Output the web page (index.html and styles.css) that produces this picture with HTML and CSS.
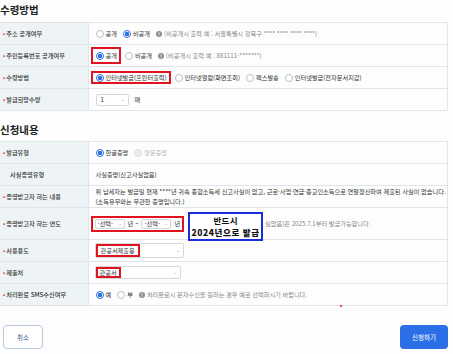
FILE: index.html
```html
<!DOCTYPE html>
<html lang="ko">
<head>
    <meta charset="UTF-8">
    <meta name="viewport" content="width=device-width, initial-scale=1.0">
    <title>사실증명 신청</title>
    <link rel="stylesheet" href="styles.css">
</head>
<body>
    <div class="page">
        <h2 class="sec-title">수령방법</h2>
        <table class="form-table">
            <colgroup><col class="col-label"><col></colgroup>
            <tr>
                <th><span class="req">•</span>주소 공개여부</th>
                <td>
                    <div class="field">
                        <span class="radio"><i class="dot"></i>공개</span>
                        <span class="radio on"><i class="dot"></i>비공개</span>
                        <span class="hint"><i class="info">!</i>[비공개시 출력 예 : 서울특별시 강북구 **** **** **** ****)</span>
                    </div>
                </td>
            </tr>
            <tr>
                <th><span class="req">•</span>주민등록번호 공개여부</th>
                <td>
                    <div class="field">
                        <span class="mark mark-tall"><span class="radio on"><i class="dot"></i>공개</span></span>
                        <span class="radio"><i class="dot"></i>비공개</span>
                        <span class="hint"><i class="info">!</i>[비공개시 출력 예 : 881111-*******)</span>
                    </div>
                </td>
            </tr>
            <tr>
                <th><span class="req">•</span>수령방법</th>
                <td>
                    <div class="field">
                        <span class="mark"><span class="radio on"><i class="dot"></i>인터넷발급(프린터출력)</span></span>
                        <span class="radio"><i class="dot"></i>인터넷열람(화면조회)</span>
                        <span class="radio"><i class="dot"></i>팩스발송</span>
                        <span class="radio"><i class="dot"></i>인터넷발급(전자문서지갑)</span>
                    </div>
                </td>
            </tr>
            <tr>
                <th><span class="req">•</span>발급희망수량</th>
                <td>
                    <div class="field">
                        <span class="select sel-qty">1<i class="caret">⌄</i></span>
                        <span>매</span>
                    </div>
                </td>
            </tr>
        </table>

        <h2 class="sec-title sec-second">신청내용</h2>
        <table class="form-table">
            <colgroup><col class="col-label"><col></colgroup>
            <tr>
                <th><span class="req">•</span>발급유형</th>
                <td>
                    <div class="field">
                        <span class="radio on"><i class="dot"></i>한글증명</span>
                        <span class="radio off"><i class="dot"></i>영문증명</span>
                    </div>
                </td>
            </tr>
            <tr>
                <th class="plain">사실증명유형</th>
                <td>사실증명(신고사실없음)</td>
            </tr>
            <tr class="row-text">
                <th><span class="req">•</span>증명받고자 하는 내용</th>
                <td class="text-cell">위 납세자는 발급일 현재 ****년 귀속 종합소득세 신고사실이 없고, 근로·사업·연금·종교인소득으로 연말정산하여 제출된 사실이 없습니다.(소득유무와는 무관한 증명입니다.)</td>
            </tr>
            <tr class="row-year">
                <th><span class="req">•</span>증명받고자 하는 연도</th>
                <td>
                    <div class="field">
                        <span class="mark mark-year">
                            <span class="select sel-year">-선택-<i class="caret">⌄</i></span>
                            <span>년 ~</span>
                            <span class="select sel-year">-선택-<i class="caret">⌄</i></span>
                            <span>년</span>
                        </span>
                        <div class="notice">반드시<br><b>2024년으로 발급</b></div>
                        <span class="hint">실없음)은 2025.7.1부터 발급가능합니다.</span>
                    </div>
                </td>
            </tr>
            <tr class="row-sm">
                <th><span class="req">•</span>사용용도</th>
                <td>
                    <span class="select sel-use"><span class="mark mark-in">관공서제출용</span><i class="caret">⌄</i></span>
                </td>
            </tr>
            <tr class="row-sm">
                <th><span class="req">•</span>제출처</th>
                <td>
                    <span class="select sel-dest"><span class="mark mark-in">관공서</span><i class="caret">⌄</i></span>
                </td>
            </tr>
            <tr class="row-sms">
                <th><span class="req">•</span>처리완료 SMS수신여부</th>
                <td>
                    <div class="field">
                        <span class="radio on"><i class="dot"></i>예</span>
                        <span class="radio"><i class="dot"></i>부</span>
                        <span class="hint"><i class="info">!</i>처리완료시 문자수신을 원하는 경우 예로 선택하시기 바랍니다.</span>
                    </div>
                    <span class="red-dot"></span>
                </td>
            </tr>
        </table>

        <div class="actions">
            <button class="btn btn-cancel">취소</button>
            <button class="btn btn-submit">신청하기</button>
        </div>
    </div>
</body>
</html>
```

FILE: styles.css
```css
body {
    margin: 0;
    padding: 0;
    font-family: "Noto Sans CJK KR", "Noto Sans", sans-serif;
    background-color: #fdfdfd;
    color: #333;
}
.page {
    width: 448px;
}
.sec-title {
    margin: 0;
    height: 22px;
    line-height: 20px;
    font-size: 10.5px;
    font-weight: 700;
    color: #222;
}
.sec-second {
    margin-top: 8px;
    height: 22px;
    line-height: 22px;
}
.form-table {
    width: 448px;
    border-collapse: collapse;
    table-layout: fixed;
    font-size: 6.2px;
}
.col-label {
    width: 88px;
}
.form-table tr {
    height: 22px;
}
.form-table th {
    background-color: #eef3f6;
    text-align: left;
    font-weight: 500;
    padding: 0 0 0 3px;
    border-top: 1px solid #dfe5ea;
    border-bottom: 1px solid #dfe5ea;
    color: #333;
    white-space: nowrap;
}
.form-table th.plain {
    padding-left: 10px;
}
.form-table td {
    padding: 0 0 0 7px;
    border: 1px solid #dfe5ea;
    color: #333;
    position: relative;
}
.req {
    color: #e0475a;
    margin-right: 1px;
}
.field {
    display: flex;
    align-items: center;
    gap: 6px;
}
.radio {
    display: inline-flex;
    align-items: center;
    gap: 2px;
}
.dot {
    width: 6px;
    height: 6px;
    border: 1px solid #b9c0c7;
    border-radius: 50%;
    background: #fff;
    box-sizing: content-box;
}
.radio.on .dot {
    border-color: #2a6fe0;
    background: radial-gradient(circle, #2a6fe0 0 2px, #fff 2.4px);
}
.radio.off {
    color: #b5b9bd;
}
.radio.off .dot {
    background: #e9ecef;
    border-color: #dde1e5;
}
.hint {
    display: inline-flex;
    align-items: center;
    gap: 2px;
    color: #888;
}
.info {
    width: 6px;
    height: 6px;
    border-radius: 50%;
    background: #8a8f94;
    color: #fff;
    font-style: normal;
    font-size: 5px;
    line-height: 6px;
    text-align: center;
    font-weight: 700;
}
.mark {
    display: inline-flex;
    align-items: center;
    gap: 3px;
    border: 2px solid #e0141e;
    padding: 0 2px 0 3px;
    margin-left: -5px;
    margin-right: -2px;
}
.mark-tall {
    height: 13px;
}
.mark-year {
    height: 12px;
    padding: 0 2px;
    margin-left: -5px;
}
.select {
    display: inline-flex;
    align-items: center;
    justify-content: space-between;
    height: 12px;
    padding: 0 3px 0 4px;
    border: 1px solid #d3d8dd;
    border-radius: 2px;
    background: #fff;
    box-sizing: border-box;
}
.caret {
    font-style: normal;
    color: #999;
    font-size: 5px;
    line-height: 5px;
    padding-bottom: 2px;
}
.sel-qty {
    width: 33px;
}
.sel-year {
    width: 30px;
    height: 10px;
    padding: 0 2px;
}
.sel-use {
    width: 89px;
    height: 15px;
    padding-left: 0;
    margin-left: -1px;
}
.sel-dest {
    width: 86px;
    height: 13px;
    padding-left: 0;
    margin-left: -1px;
}
.mark-in {
    margin: 0;
    padding: 0 3px;
    height: 100%;
    box-sizing: border-box;
}
.sel-dest .mark-in {
    padding: 0 2px;
}
.row-text {
    height: 30px;
}
.text-cell {
    line-height: 10px;
    padding-top: 2px;
}
.row-year {
    height: 23px;
}
.row-sm {
    height: 21px;
}
.row-sms {
    height: 23px;
}
.notice {
    flex: none;
    width: 71px;
    height: 25px;
    margin: 4px -4px -2px 0;
    border: 2px solid #1a2ddc;
    background: #fff;
    color: #111;
    font-size: 8.5px;
    line-height: 12px;
    text-align: center;
    font-weight: 700;
    letter-spacing: 0.3px;
    position: relative;
    z-index: 1;
}
.notice b {
    letter-spacing: 0.6px;
}
.red-dot {
    position: absolute;
    left: 251px;
    bottom: -2px;
    width: 2px;
    height: 2px;
    background: #e0141e;
    border-radius: 50%;
}
.actions {
    display: flex;
    justify-content: space-between;
    padding: 19px 0 0 3px;
}
.btn {
    height: 24px;
    border-radius: 4px;
    font-family: inherit;
    font-size: 6.5px;
    cursor: pointer;
}
.btn-cancel {
    width: 40px;
    background: #fff;
    border: 1px solid #b8c8dc;
    color: #3b5a8a;
}
.btn-submit {
    width: 48px;
    background-color: #2b6fe6;
    border: none;
    color: white;
}
```
